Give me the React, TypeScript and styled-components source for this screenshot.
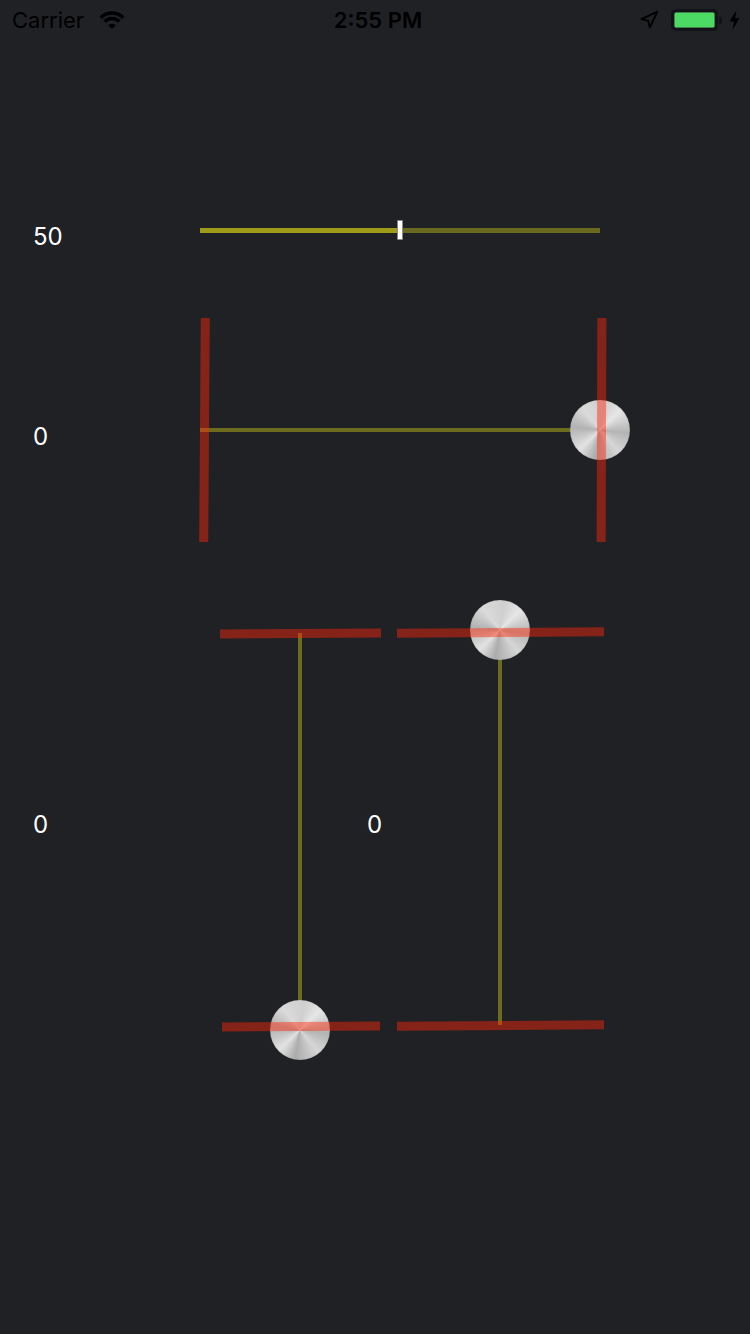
import styled, { createGlobalStyle } from "styled-components";

const GlobalStyle = createGlobalStyle`
  html, body {
    margin: 0;
    padding: 0;
    background: #202125;
  }
  body {
    font-family: Inter, "Liberation Sans", sans-serif;
  }
`;

const Screen = styled.div`
  width: 750px;
  min-height: 1334px;
  background: #202125;
  color: #fff;
  overflow: hidden;
`;

const StatusBar = styled.div`
  height: 40px;
  display: grid;
  grid-template-columns: 1fr auto 1fr;
  align-items: center;
  padding: 0 10px 0 12px;
  color: #000;
  font-size: 22px;
`;

const StatusLeft = styled.div`
  display: flex;
  align-items: center;
  gap: 14px;
`;

const StatusTime = styled.div`
  font-weight: 600;
  padding-left: 4px;
`;

const StatusRight = styled.div`
  display: flex;
  align-items: center;
  justify-content: flex-end;
`;

const Battery = styled.div`
  width: 41px;
  height: 16px;
  margin-left: 12px;
  border: 3px solid #121316;
  border-radius: 5px;
  background: #4cd964;
  background-clip: padding-box;
  box-shadow: inset 0 0 0 0.5px #2a2b2e;
`;

const BatteryNub = styled.div`
  width: 3px;
  height: 7px;
  margin-left: 1px;
  margin-right: 7px;
  background: #121316;
  border-radius: 0 2px 2px 0;
`;

const Content = styled.div`
  padding-left: 33px;
  display: flex;
  flex-direction: column;
`;

const Row = styled.div<{ $gap: number; $height: number }>`
  display: flex;
  align-items: flex-start;
  margin-top: ${(p) => p.$gap}px;
  height: ${(p) => p.$height}px;
`;

const Label = styled.div<{ $top: number; $width: number }>`
  width: ${(p) => p.$width}px;
  flex: none;
  margin-top: ${(p) => p.$top}px;
  font-size: 24px;
  line-height: 28px;
  color: #fff;
`;

/* value slider */
const ValueSlider = styled.div`
  position: relative;
  width: 400px;
  height: 40px;
  display: flex;
  align-items: center;
`;

const TrackPart = styled.div<{ $on?: boolean }>`
  flex: 1;
  height: 5px;
  background: ${(p) => (p.$on ? "#9d9b17" : "#6b6920")};
`;

const TickThumb = styled.div`
  position: absolute;
  left: 197px;
  top: 10px;
  width: 4px;
  height: 18px;
  background: #fff;
  border: 1px solid #8a8a8a;
  border-radius: 1px;
`;

/* custom sliders with stops */
const Control = styled.div<{ $width: number; $height: number }>`
  position: relative;
  flex: none;
  width: ${(p) => p.$width}px;
  height: ${(p) => p.$height}px;
`;

const Rail = styled.div<{ $x: number; $y: number; $w: number; $h: number }>`
  position: absolute;
  left: ${(p) => p.$x}px;
  top: ${(p) => p.$y}px;
  width: ${(p) => p.$w}px;
  height: ${(p) => p.$h}px;
  background: #6d6b1e;
`;

const Stop = styled.div<{ $x: number; $y: number; $w: number; $h: number; $tilt: number }>`
  position: absolute;
  left: ${(p) => p.$x}px;
  top: ${(p) => p.$y}px;
  width: ${(p) => p.$w}px;
  height: ${(p) => p.$h}px;
  background: rgba(255, 40, 8, 0.46);
  transform: rotate(${(p) => p.$tilt}deg);
  z-index: 2;
`;

const Knob = styled.div<{ $x: number; $y: number }>`
  position: absolute;
  left: ${(p) => p.$x}px;
  top: ${(p) => p.$y}px;
  width: 60px;
  height: 60px;
  border-radius: 50%;
  z-index: 1;
  background: conic-gradient(
    from 10deg,
    #cfcfcf,
    #e6e6e6 10%,
    #b4b4b4 24%,
    #d6d6d6 36%,
    #acacac 50%,
    #e2e2e2 60%,
    #b2b2b2 74%,
    #dadada 86%,
    #cfcfcf
  );
  box-shadow: inset 0 0 1px rgba(0, 0, 0, 0.4);
`;

const Wifi = () => (
  <svg width="28" height="20" viewBox="0 0 28 20">
    <g fill="none" stroke="#000" strokeWidth="3.4">
      <path d="M2.7 7.7 A16 16 0 0 1 25.3 7.7" />
      <path d="M6.6 11.6 A10.5 10.5 0 0 1 21.4 11.6" />
    </g>
    <path d="M14 19 L10.2 15.2 A5.4 5.4 0 0 1 17.8 15.2 Z" fill="#000" />
  </svg>
);

const LocationArrow = () => (
  <svg width="20" height="20" viewBox="0 0 24 24">
    <polygon
      points="3 11 22 2 13 21 11 13 3 11"
      fill="none"
      stroke="#000"
      strokeWidth="2.2"
      strokeLinejoin="round"
    />
  </svg>
);

const Bolt = () => (
  <svg width="11" height="20" viewBox="0 0 11 20">
    <path d="M7.5 0 L0.5 11.5 H5 L3.5 20 L10.5 8 H6 Z" fill="#000" />
  </svg>
);

export default function App() {
  return (
    <Screen>
      <GlobalStyle />
      <StatusBar>
        <StatusLeft>
          <span>Carrier</span>
          <Wifi />
        </StatusLeft>
        <StatusTime>2:55 PM</StatusTime>
        <StatusRight>
          <LocationArrow />
          <Battery />
          <BatteryNub />
          <Bolt />
        </StatusRight>
      </StatusBar>

      <Content>
        <Row $gap={170} $height={40}>
          <Label $top={13} $width={167}>50</Label>
          <ValueSlider>
            <TrackPart $on />
            <TrackPart />
            <TickThumb />
          </ValueSlider>
        </Row>

        <Row $gap={68} $height={224}>
          <Label $top={105} $width={167}>0</Label>
          <Control $width={405} $height={224}>
            <Rail $x={0} $y={110} $w={372} $h={4} />
            <Knob $x={370} $y={82} />
            <Stop $x={0} $y={0} $w={8.5} $h={224} $tilt={0.4} />
            <Stop $x={397} $y={0} $w={8.5} $h={224} $tilt={0.2} />
          </Control>
        </Row>

        <Row $gap={58} $height={460}>
          <Label $top={211} $width={187}>0</Label>
          <Control $width={147} $height={460}>
            <Stop $x={0} $y={29} $w={161} $h={9} $tilt={-0.3} />
            <Rail $x={78} $y={33} $w={4} $h={393} />
            <Knob $x={50} $y={400} />
            <Stop $x={2} $y={422} $w={158} $h={8.5} $tilt={-0.3} />
          </Control>
          <Label $top={211} $width={30}>0</Label>
          <Control $width={207} $height={460}>
            <Stop $x={0} $y={28} $w={207} $h={9} $tilt={-0.35} />
            <Rail $x={101} $y={30} $w={4} $h={395} />
            <Knob $x={73} $y={0} />
            <Stop $x={0} $y={421} $w={207} $h={8.5} $tilt={-0.35} />
          </Control>
        </Row>
      </Content>
    </Screen>
  );
}
